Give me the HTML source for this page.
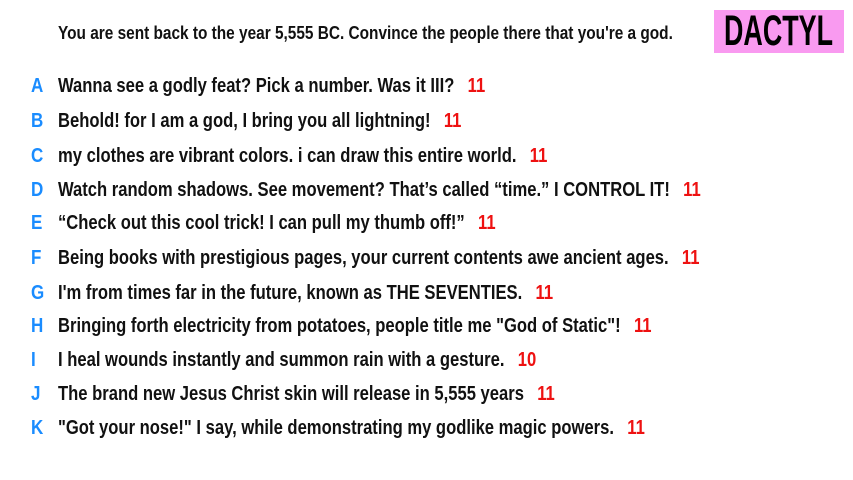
<!DOCTYPE html>
<html><head><style>
html,body{margin:0;padding:0;background:#fff;width:853px;height:480px;overflow:hidden}
body{font-family:"Liberation Sans Narrow","Liberation Sans",sans-serif;font-weight:bold;color:#111;position:relative}
.sx{display:inline-block;transform:scaleX(0.83);transform-origin:0 50%;white-space:nowrap}
.h{position:absolute;left:58px;top:23px;font-size:18px;white-space:nowrap}
.h .sx{transform:scaleX(0.855)}
.logo{position:absolute;left:714px;top:10px;width:130px;height:43px;background:#f99af0;overflow:hidden}
.logo div{position:absolute;left:10px;top:0;font-size:43px;line-height:43px;color:#000;transform:scaleX(0.625);transform-origin:0 50%;white-space:nowrap}
.r{position:absolute;left:0;font-size:20px;white-space:nowrap;line-height:24px}
.r b{position:absolute;left:31px;color:#1a8cff;transform:scaleX(0.85);transform-origin:0 50%}
.r span{position:absolute;left:58px}
.r i{font-style:normal;color:#ee1111;margin-left:16px}
</style></head><body>
<div class="h"><span class="sx">You are sent back to the year 5,555 BC. Convince the people there that you're a god.</span></div>
<div class="logo"><div>DACTYL</div></div>
<div class="r" style="top:74px"><b>A</b><span class="sx">Wanna see a godly feat? Pick a number. Was it III?<i>11</i></span></div>
<div class="r" style="top:109px"><b>B</b><span class="sx">Behold! for I am a god, I bring you all lightning!<i>11</i></span></div>
<div class="r" style="top:144px"><b>C</b><span class="sx">my clothes are vibrant colors. i can draw this entire world.<i>11</i></span></div>
<div class="r" style="top:178px"><b>D</b><span class="sx">Watch random shadows. See movement? That’s called “time.” I CONTROL IT!<i>11</i></span></div>
<div class="r" style="top:211px"><b>E</b><span class="sx">“Check out this cool trick! I can pull my thumb off!”<i>11</i></span></div>
<div class="r" style="top:246px"><b>F</b><span class="sx">Being books with prestigious pages, your current contents awe ancient ages.<i>11</i></span></div>
<div class="r" style="top:281px"><b>G</b><span class="sx">I'm from times far in the future, known as THE SEVENTIES.<i>11</i></span></div>
<div class="r" style="top:314px"><b>H</b><span class="sx">Bringing forth electricity from potatoes, people title me "God of Static"!<i>11</i></span></div>
<div class="r" style="top:348px"><b>I</b><span class="sx">I heal wounds instantly and summon rain with a gesture.<i>10</i></span></div>
<div class="r" style="top:382px"><b>J</b><span class="sx">The brand new Jesus Christ skin will release in 5,555 years<i>11</i></span></div>
<div class="r" style="top:416px"><b>K</b><span class="sx">"Got your nose!" I say, while demonstrating my godlike magic powers.<i>11</i></span></div>
</body></html>
